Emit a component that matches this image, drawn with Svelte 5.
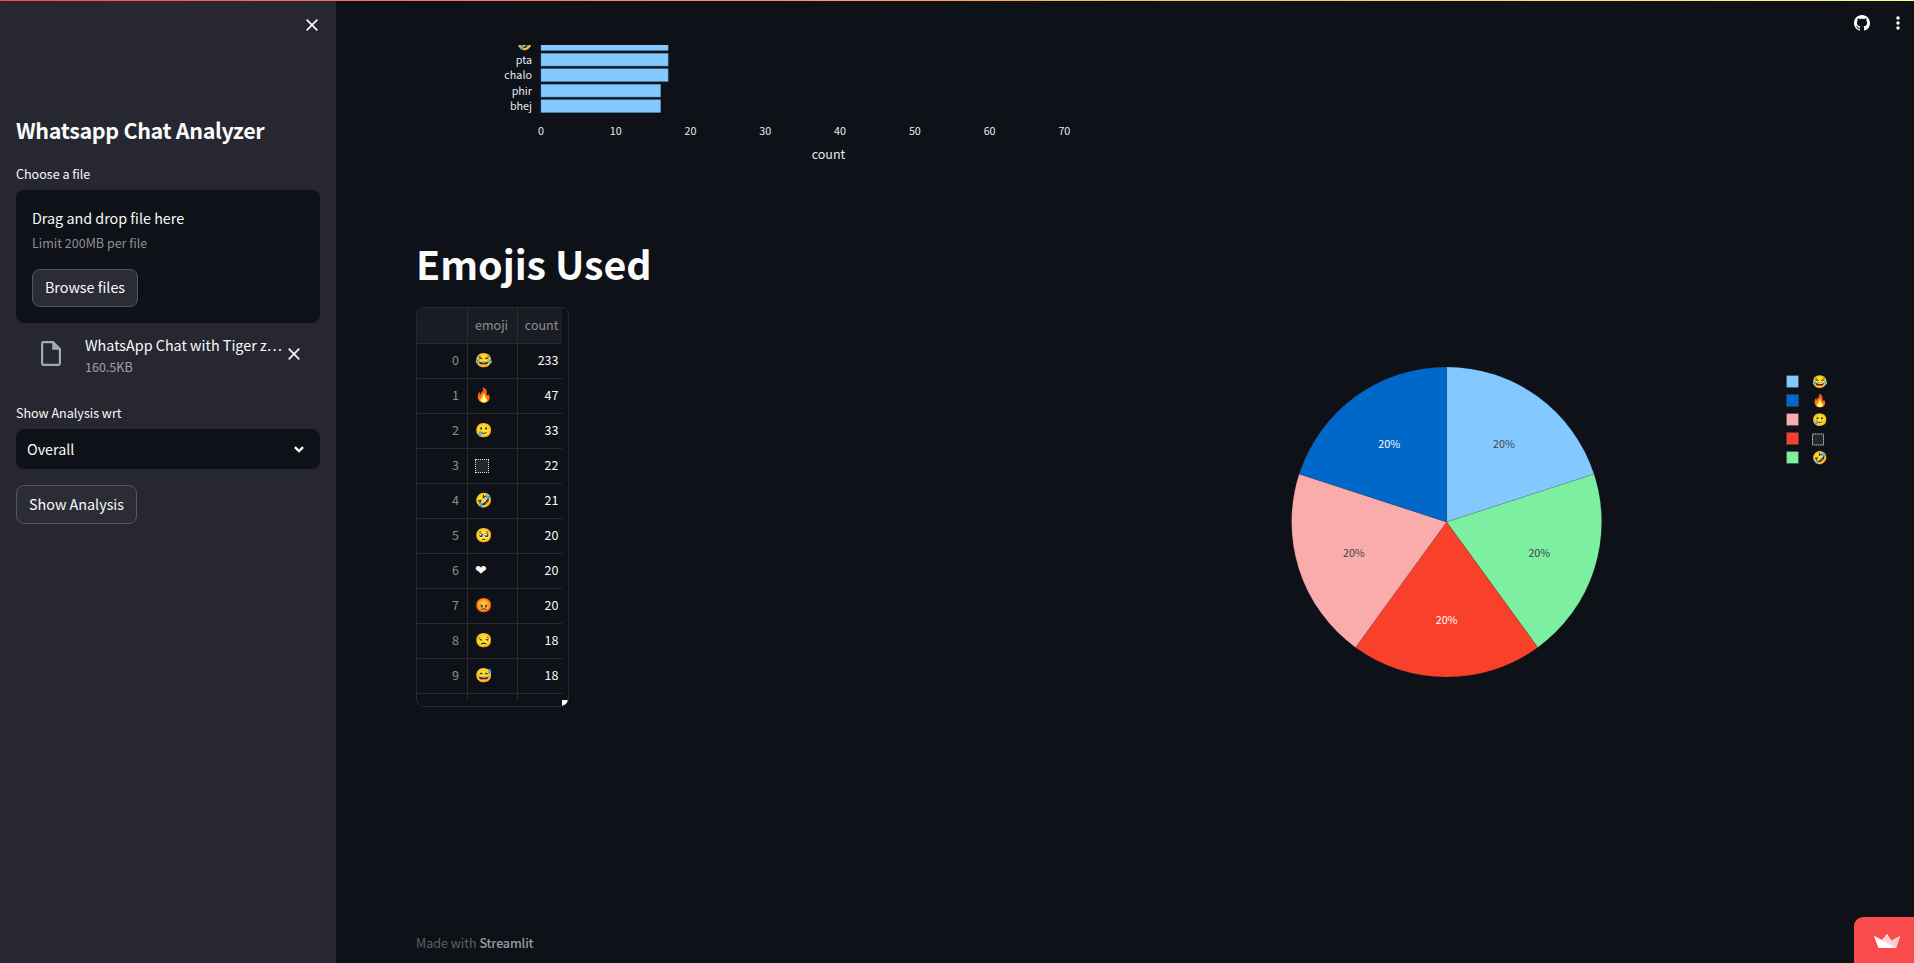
<script>
  const rows = [
    ['😂', 233], ['🔥', 47], ['🥲', 33], ['box', 22], ['🤣', 21],
    ['🥺', 20], ['heart', 20], ['😡', 20], ['😒', 18], ['😅', 18]
  ];
  const unit = 7.477;
  const bars = [
    { label: '', count: 17 }, { label: 'pta', count: 17 }, { label: 'chalo', count: 17 },
    { label: 'phir', count: 16 }, { label: 'bhej', count: 16 }
  ];
  const ticks = [0, 10, 20, 30, 40, 50, 60, 70];
  const slices = [
    { color: '#83c9ff', text: '#444' }, { color: '#7defa1', text: '#444' },
    { color: '#f8402b', text: '#fff' }, { color: '#faabab', text: '#444' },
    { color: '#0068c9', text: '#fff' }
  ];
  const legend = [
    ['#83c9ff', '😂'], ['#0068c9', '🔥'], ['#faabab', '🥲'], ['#f8402b', 'box'], ['#7defa1', '🤣']
  ];
  const R = 155;
  const cx = 313.6;
  const cy = 172;
  const pt = (deg, r) => {
    const a = (deg * Math.PI) / 180;
    return [cx + r * Math.sin(a), cy - r * Math.cos(a)];
  };
  const arc = (i) => `M${cx},${cy}L${pt(i * 72, R)}A${R},${R} 0 0 1 ${pt(i * 72 + 72, R)}Z`;
  const mid = (i) => pt(i * 72 + 36, 97.5);
</script>

<div class="app">
  <div class="decoration"></div>
  <aside>
    <div class="close">
      <svg width="12" height="12" viewBox="0 0 12 12"><path d="M.7.7l10.6 10.6M11.3.7L.7 11.3" /></svg>
    </div>
    <h2>Whatsapp Chat Analyzer</h2>
    <div class="label">Choose a file</div>
    <div class="drop">
      <div class="drop-title">Drag and drop file here</div>
      <div class="drop-limit">Limit 200MB per file</div>
      <button class="browse">Browse files</button>
    </div>
    <div class="file">
      <svg class="doc" width="20" height="25" viewBox="0 0 20 25">
        <path fill-rule="evenodd" d="M2.4 0H12.4L20 7.6V22.6Q20 25 17.6 25H2.4Q0 25 0 22.6V2.4Q0 0 2.4 0ZM2.2 2.2V22.8H17.8V8.8H11.2V2.2Z" fill="#a3a8b8" />
      </svg>
      <div class="file-info">
        <div class="file-name">WhatsApp Chat with Tiger z…</div>
        <div class="file-size">160.5KB</div>
      </div>
      <svg class="remove" width="12" height="12" viewBox="0 0 12 12"><path d="M.7.7l10.6 10.6M11.3.7L.7 11.3" /></svg>
    </div>
    <div class="label wrt">Show Analysis wrt</div>
    <div class="select">
      <span>Overall</span>
      <svg width="10" height="7" viewBox="0 0 10 7"><path d="M.9 1.1L5 5.1L9.1 1.1" fill="none" stroke="#fafafa" stroke-width="2.3" /></svg>
    </div>
    <button class="show">Show Analysis</button>
  </aside>

  <main>
    <header>
      <svg width="16" height="16" viewBox="0 0 16 16" fill="#fff"><path d="M8 0C3.58 0 0 3.58 0 8c0 3.54 2.29 6.53 5.47 7.59.4.07.55-.17.55-.38 0-.19-.01-.82-.01-1.49-2.01.37-2.53-.49-2.69-.94-.09-.23-.48-.94-.82-1.13-.28-.15-.68-.52-.01-.53.63-.01 1.08.58 1.23.82.72 1.21 1.87.87 2.33.66.07-.52.28-.87.51-1.07-1.78-.2-3.64-.89-3.64-3.95 0-.87.31-1.59.82-2.15-.08-.2-.36-1.02.08-2.12 0 0 .67-.21 2.2.82.64-.18 1.32-.27 2-.27s1.36.09 2 .27c1.53-1.04 2.2-.82 2.2-.82.44 1.1.16 1.92.08 2.12.51.56.82 1.27.82 2.15 0 3.07-1.87 3.75-3.65 3.95.29.25.54.73.54 1.48 0 1.07-.01 1.93-.01 2.2 0 .21.15.46.55.38A8.01 8.01 0 0 0 16 8c0-4.42-3.58-8-8-8z" /></svg>
      <svg width="4" height="14" viewBox="0 0 4 14" fill="#fff"><circle cx="2" cy="2" r="1.75" /><circle cx="2" cy="7" r="1.75" /><circle cx="2" cy="12" r="1.75" /></svg>
    </header>

    <svg class="bar-chart" width="701" height="135" viewBox="0 0 701 135">
      <text class="emo" x="117" y="2.6" text-anchor="end" font-size="12.5">🤣</text>
      {#each bars as b, i}
        <rect x="125" y={-7.2 + i * 15.5} width={b.count * unit} height="12.7" fill="#83c9ff" stroke="#5d8fb6" stroke-width=".5" />
        <text x="116" y={3.3 + i * 15.5} text-anchor="end" font-size="10.75">{b.label}</text>
      {/each}
      {#each ticks as t}
        <text x={125 + t * unit} y="90" text-anchor="middle" font-size="10.75">{t}</text>
      {/each}
      <text x="412.5" y="114" text-anchor="middle" font-size="12.5">count</text>
    </svg>

    <h1>Emojis Used</h1>

    <div class="columns">
      <div class="table">
        <div class="grid">
          <div class="row head"><div></div><div>emoji</div><div>count</div></div>
          {#each rows as [e, n], i}
            <div class="row">
              <div>{i}</div>
              <div>
                {#if e === 'box'}<span class="box"></span>{:else if e === 'heart'}<span class="heart">❤&#xFE0E;</span>{:else}<span class="emoji">{e}</span>{/if}
              </div>
              <div>{n}</div>
            </div>
          {/each}
          <div class="row"><div></div><div></div><div></div></div>
        </div>
        <svg class="corner" width="6" height="6" viewBox="0 0 6 6"><path d="M0 0H6L5.5 2Q4.500 4.500 0 6Z" fill="#fff" /></svg>
      </div>
      <svg class="pie" width="701" height="400" viewBox="0 0 701 400">
        {#each slices as s, i}
          <path d={arc(i)} fill={s.color} stroke="#444" stroke-width=".15" />
          <text x={mid(i)[0]} y={mid(i)[1] + 4.7} text-anchor="middle" font-size="10.75" style:fill={s.text}>20%</text>
        {/each}
        {#each legend as [c, e], i}
          <rect x="653.5" y={25.500 + i * 19} width="12" height="12" fill={c} stroke="#444" stroke-width=".5" />
          {#if e === 'box'}
            <rect x="679.5" y={27 + i * 19} width="11" height="11" fill="#25272d" stroke="#bbb" stroke-dasharray="1.500 .5" />
          {:else}
            <text class="emo" x="679.5" y={36.2 + i * 19} font-size="12.5">{e}</text>
          {/if}
        {/each}
      </svg>
    </div>

    <footer>Made with <b>Streamlit</b></footer>
    <div class="badge">
      <svg width="27" height="15" viewBox="0 0 27 15">
        <path d="M0 2L8.200 6L13 0L17.300 6.800L26.200 2L22 14H4.500Z" fill="#fff" />
        <path d="M8.200 6L13 0L22 13.500Z" fill="#ffd0dc" />
        <path d="M17.300 6.800L26.200 2L22 14Z" fill="#ffc4d3" />
        <path d="M0 2L22 14" stroke="#fdc9cf" stroke-width=".5" />
      </svg>
    </div>
  </main>
</div>

<style>
  :global(body) { margin: 0; background: #0e1117; }
  .app {
    position: relative; display: flex; width: 100%; height: 963px; overflow: hidden;
    font-family: "Noto Sans CJK SC", "Noto Sans", sans-serif; color: #fafafa; font-size: 14.33px;
  }
  .decoration {
    position: absolute; top: 0; left: 0; right: 0; height: 1px; z-index: 3;
    background: linear-gradient(90deg, #ff4b4b, #fffd80);
  }
  aside { width: 336px; box-sizing: border-box; padding: 19px 16px; background: #262730; flex: none; }
  .close { display: flex; justify-content: flex-end; padding-right: 2px; height: 96px; }
  .close path, .remove path { stroke: #fafafa; stroke-width: 1.7; fill: none; }
  h2 { margin: 0; font-size: 21.5px; font-weight: 600; line-height: 30px; white-space: nowrap; letter-spacing: -.34px; }
  .label { margin-top: 19px; height: 26px; line-height: 20px; font-size: 12.54px; }
  .drop { height: 133px; box-sizing: border-box; background: #0e1117; border-radius: 8px; padding: 16px; }
  .drop-title { line-height: 23px; height: 25px; }
  .drop-limit { line-height: 23px; font-size: 12.54px; color: #8d8f93; }
  button {
    display: block; font: inherit; color: #fafafa; background: #2b2c36; padding: 0 0 2px;
    border: 1px solid #555660; border-radius: 8px; line-height: 24px;
  }
  .browse { width: 106px; height: 38px; margin-top: 15px; }
  .file { display: flex; padding-left: 25px; height: 79px; padding-top: 11px; box-sizing: border-box; }
  .doc { margin-top: 7px; }
  .file-info { margin-left: 24px; margin-top: -1px; width: 203px; white-space: nowrap; }
  .file-name { line-height: 24px; }
  .file-size { line-height: 20px; font-size: 12.54px; color: #a0a1a6; }
  .remove { margin-top: 14px; }
  .label.wrt { margin-top: 1px; }
  .select {
    height: 40px; border-radius: 8px; background: #0e1117; display: flex; align-items: center;
    justify-content: space-between; padding: 0 16px 0 11px;
  }
  .select span { padding-bottom: 2px; }
  .show { width: 121px; height: 39px; margin-top: 16px; }
  main { flex: 1; position: relative; padding-left: 80px; display: flex; flex-direction: column; }
  header { height: 45px; flex: none; display: flex; justify-content: flex-end; align-items: center; gap: 26px; padding-right: 14px; }
  .bar-chart { flex: none; display: block; overflow: hidden; }
  .bar-chart text { fill: #e6eaf1; }
  .emo, .emoji { font-family: "Noto Color Emoji", sans-serif; }
  .emoji { font-size: 14px; }
  h1 { margin: 55px 0 0; height: 72px; line-height: 55px; font-size: 39.3px; font-weight: 700; white-space: nowrap; }
  .columns { display: flex; height: 400px; flex: none; justify-content: space-between; padding-right: 80px; }
  .table {
    position: relative; width: 153px; height: 400px; box-sizing: border-box; overflow: hidden;
    border: 1px solid #262930; border-radius: 8px;
  }
  .grid { width: 145px; height: 392px; overflow: hidden; font-size: 12.54px; }
  .row { display: grid; grid-template-columns: 51px 50px 44px; height: 35px; }
  .row > div {
    box-sizing: border-box; height: 35px; line-height: 32px; border-bottom: 1px solid #292b31;
    border-right: 1px solid #292b31; padding: 0 4px 0 7px; overflow: hidden; white-space: nowrap;
  }
  .row > div:first-child { text-align: right; padding-right: 8px; color: #8d8f93; }
  .row > div:last-child { text-align: right; border-right: 0; padding-left: 0; padding-right: 3.5px; }
  .row.head, .row.head > div { height: 36px; line-height: 34px; background: #1a1c24; color: #8d8f93; }
  .box { display: inline-block; width: 12px; height: 12px; border: 1px dotted #ddd; background: #25272d; vertical-align: -3px; box-sizing: content-box; }
  .heart { font-family: "DejaVu Sans", sans-serif; font-size: 14px; }
  .corner { position: absolute; right: 0; bottom: 0; }
  .pie { display: block; margin-top: 43px; flex: none; }
  footer { position: relative; margin-top: 224px; line-height: 24px; font-size: 12.54px; color: #5e6065; }
  footer b { font-weight: 500; color: #9a9b9f; letter-spacing: -.16px; }
  .badge {
    position: absolute; right: 0; bottom: 0; width: 60px; height: 46px; box-sizing: border-box;
    background: #f94b4b; border-radius: 9px 0 0 0; padding: 15px 0 0 20px;
  }
</style>
